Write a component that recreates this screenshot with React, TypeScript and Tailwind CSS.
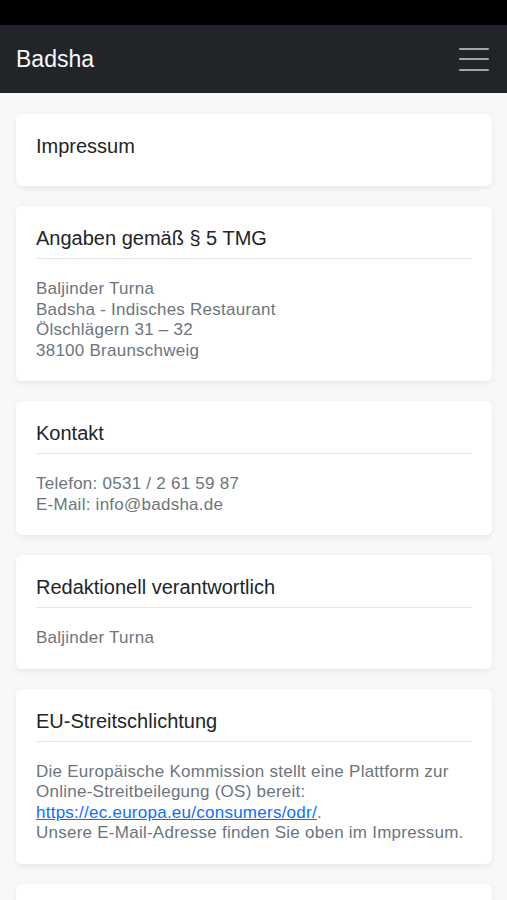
import React from "react";

function Card({ title, children }: { title: string; children?: React.ReactNode }) {
  return (
    <div className="rounded-[6px] bg-white px-5 pt-5 pb-5 shadow-[0_2px_6px_rgba(0,0,0,0.07)]">
      <h2
        className={
          "text-[20px] leading-[24px] text-[#212529] pb-[8px] " +
          (children ? "border-b border-[#e3e5e8] mb-5" : "")
        }
      >
        {title}
      </h2>
      {children ? (
        <div className="text-[17px] leading-[20.5px] tracking-[0.25px] text-[#6c757d]">{children}</div>
      ) : null}
    </div>
  );
}

export default function App() {
  return (
    <div className="min-h-[900px] bg-[#f7f8fa]" style={{ fontFamily: '"Liberation Sans", Arial, sans-serif' }}>
      <div className="h-[25px] bg-black" />
      <nav className="flex h-[68px] items-center justify-between bg-[#212529] pl-4 pr-[18px]">
        <span className="text-[23px] text-[#f8f9fa]">Badsha</span>
        <div className="flex w-[30px] flex-col gap-[8.5px]">
          <span className="block h-[2px] w-full rounded bg-[#a3a5a7]" />
          <span className="block h-[2px] w-full rounded bg-[#a3a5a7]" />
          <span className="block h-[2px] w-full rounded bg-[#a3a5a7]" />
        </div>
      </nav>
      <main className="flex flex-col gap-5 pl-4 pr-[15px] pt-[21px] pb-6">
        <Card title="Impressum" />
        <Card title="Angaben gemäß § 5 TMG">
          <p>
            Baljinder Turna
            <br />
            Badsha - Indisches Restaurant
            <br />
            Ölschlägern 31 – 32
            <br />
            38100 Braunschweig
          </p>
        </Card>
        <Card title="Kontakt">
          <p>
            Telefon: 0531 / 2 61 59 87
            <br />
            E-Mail: info@badsha.de
          </p>
        </Card>
        <Card title="Redaktionell verantwortlich">
          <p>Baljinder Turna</p>
        </Card>
        <Card title="EU-Streitschlichtung">
          <p>
            Die Europäische Kommission stellt eine Plattform zur Online-Streitbeilegung (OS) bereit:{" "}
            <a href="#" className="text-[#0d6efd] underline">
              https://ec.europa.eu/consumers/odr/
            </a>
            .
            <br />
            Unsere E-Mail-Adresse finden Sie oben im Impressum.
          </p>
        </Card>
        <Card title="Verbraucherstreitbeilegung/Universalschlichtungsstelle">
          <p>
            Wir sind nicht bereit oder verpflichtet, an Streitbeilegungsverfahren vor einer
            Verbraucherschlichtungsstelle teilzunehmen.
          </p>
        </Card>
      </main>
    </div>
  );
}
